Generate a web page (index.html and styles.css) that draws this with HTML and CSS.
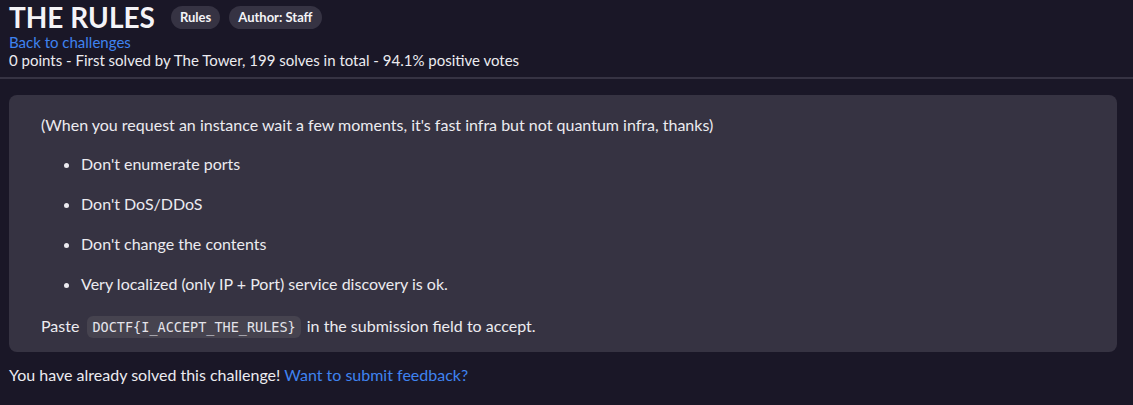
FILE: index.html
```html
<!DOCTYPE html>
<html lang="en">
<head>
<meta charset="utf-8">
<title>THE RULES</title>
<link rel="stylesheet" href="styles.css">
</head>
<body>
<header class="head">
  <div class="title-row">
    <h1 class="title">THE RULES</h1>
    <span class="pill">Rules</span>
    <span class="pill">Author: Staff</span>
  </div>
  <a class="link" href="#">Back to challenges</a>
  <div class="meta">0 points - First solved by The Tower, 199 solves in total - 94.1% positive votes</div>
</header>
<main class="main">
  <section class="card">
    <p class="para">(When you request an instance wait a few moments, it's fast infra but not quantum infra, thanks)</p>
    <ul class="rules">
      <li>Don't enumerate ports</li>
      <li>Don't DoS/DDoS</li>
      <li>Don't change the contents</li>
      <li>Very localized (only IP + Port) service discovery is ok.</li>
    </ul>
    <p class="para">Paste <code class="code">DOCTF{I_ACCEPT_THE_RULES}</code> in the submission field to accept.</p>
  </section>
  <p class="solved">You have already solved this challenge! <a class="link" href="#">Want to submit feedback?</a></p>
</main>
</body>
</html>
```
FILE: styles.css
```css
html, body {
  margin: 0;
  padding: 0;
  background: #1a1727;
  color: #ecebf0;
  font-family: Lato, "Noto Sans", sans-serif;
  font-size: 16px;
  line-height: 18px;
}
.head {
  padding: 1px 9px 8px;
  border-bottom: 2px solid #363343;
  font-size: 15px;
}
.title-row {
  display: flex;
  align-items: center;
  gap: 9px;
  height: 32px;
}
.title {
  margin: 0 7px 0 0;
  font-size: 28px;
  font-weight: 700;
  line-height: 32px;
  color: #f4f3f7;
}
.pill {
  background: #363343;
  color: #f4f3f7;
  font-size: 13px;
  font-weight: 700;
  border-radius: 12px;
  padding: 0 9px;
  height: 23px;
  line-height: 23px;
}
.link {
  color: #3f83f0;
  text-decoration: none;
}
.head .link {
  display: block;
}
.meta {
  display: block;
}
.main {
  padding: 16px 16px 0 9px;
}
.card {
  background: #363342;
  border-radius: 8px;
  padding: 18px 32px 13px;
}
.para {
  margin: 0;
  line-height: 24px;
}
.rules {
  margin: 15px 0 18px;
  padding-left: 40px;
}
.rules li {
  line-height: 24px;
  margin-bottom: 16px;
}
.rules li:last-child {
  margin-bottom: 0;
}
.code {
  font-family: "DejaVu Sans Mono", monospace;
  font-size: 13.5px;
  background: #46434f;
  color: #e4e3ea;
  border-radius: 6px;
  padding: 3px 5px;
  margin: 0 2px 0 4px;
}
.solved {
  margin: 11px 0 0;
  line-height: 24px;
}
```
